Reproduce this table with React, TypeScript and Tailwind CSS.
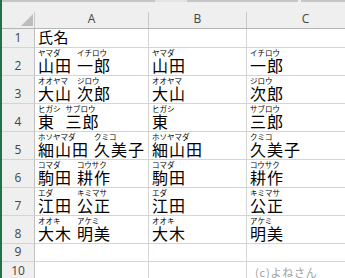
import React from "react";

const names: [string, string, string, string][] = [
  ["山田", "ヤマダ", "一郎", "イチロウ"],
  ["大山", "オオヤマ", "次郎", "ジロウ"],
  ["東", "ヒガシ", "三郎", "サブロウ"],
  ["細山田", "ホソヤマダ", "久美子", "クミコ"],
  ["駒田", "コマダ", "耕作", "コウサク"],
  ["江田", "エダ", "公正", "キミマサ"],
  ["大木", "オオキ", "明美", "アケミ"],
];

const jp = "font-['Noto_Sans_CJK_JP',sans-serif]";
const hdr = "font-['Open_Sans',sans-serif]";

function Part({ k, f }: { k: string; f: string }) {
  return (
    <div className="flex flex-col items-start">
      <div className="text-[7.5px] leading-[7px] h-[7px] mb-[1px] whitespace-nowrap text-black">{f}</div>
      <div className="text-[16px] leading-[16px] tracking-[1px] whitespace-nowrap text-black">{k}</div>
    </div>
  );
}

function RowHead({ n, h }: { n: number; h: string }) {
  return (
    <div
      className={`${h} w-[33px] shrink-0 bg-[#efefef] border-r border-b border-r-[#c0c0c0] border-b-[#d4d4d4] flex items-end justify-center pb-[3px] ${hdr} text-[12px] leading-[12px] text-[#444]`}
    >
      {n}
    </div>
  );
}

function Cell({ w, h, children }: { w: string; h: string; children?: React.ReactNode }) {
  return (
    <div className={`${w} ${h} shrink-0 border-r border-b border-[#d4d4d4] flex items-end pl-[3px] pb-[2px] overflow-hidden ${jp}`}>
      {children}
    </div>
  );
}

function ColHead({ w, label }: { w: string; label: string }) {
  return (
    <div className={`${w} h-[27px] shrink-0 flex border-b border-[#b4b4b4]`}>
      <div className={`flex-1 flex items-end justify-center pb-[3px] ${hdr} text-[12px] leading-[12px] text-[#444]`}>{label}</div>
      <div className="w-[1px] h-[16px] self-end bg-[#c8c8c8]" />
    </div>
  );
}

export default function App() {
  return (
    <div className="w-[345px] h-[278px] overflow-hidden bg-white flex">
      <div className="w-[2px] h-full bg-[#217346] shrink-0" />
      <div className="flex flex-col w-[500px] shrink-0">
        <div className="h-[2px] flex shrink-0">
          <div className="w-[153px] bg-[#c6c6c6]" />
          <div className="w-[32px] bg-[#e4e4e4]" />
          <div className="w-[111px] bg-[#c6c6c6]" />
          <div className="w-[3px] bg-[#efefef]" />
          <div className="flex-1 bg-[#c6c6c6]" />
        </div>
        <div className="flex bg-[#efefef] shrink-0">
          <div className="w-[33px] h-[27px] shrink-0 flex border-b border-[#b4b4b4]">
            <div className="flex-1 flex items-end justify-end pb-[2px] pr-[1px]">
              <svg width="12" height="12" viewBox="0 0 12 12">
                <polygon points="12,0 12,12 0,12" fill="#bdbdbd" />
              </svg>
            </div>
            <div className="w-[1px] h-[16px] self-end bg-[#c8c8c8]" />
          </div>
          <ColHead w="w-[114px]" label="A" />
          <ColHead w="w-[98px]" label="B" />
          <ColHead w="w-[118px]" label="C" />
        </div>
        <div className="flex shrink-0">
          <RowHead n={1} h="h-[19px]" />
          <Cell w="w-[114px]" h="h-[19px]">
            <span className="text-[15px] leading-[16px] tracking-[0.5px] text-black">氏名</span>
          </Cell>
          <Cell w="w-[98px]" h="h-[19px]" />
          <Cell w="w-[118px]" h="h-[19px]" />
        </div>
        {names.map(([a, af, b, bf], i) => (
          <div key={i} className="flex shrink-0">
            <RowHead n={i + 2} h="h-[28px]" />
            <Cell w="w-[114px]" h="h-[28px]">
              <div className="flex gap-[5px]">
                <Part k={a} f={af} />
                <Part k={b} f={bf} />
              </div>
            </Cell>
            <Cell w="w-[98px]" h="h-[28px]">
              <Part k={a} f={af} />
            </Cell>
            <Cell w="w-[118px]" h="h-[28px]">
              <Part k={b} f={bf} />
            </Cell>
          </div>
        ))}
        <div className="flex shrink-0">
          <RowHead n={9} h="h-[18px]" />
          <Cell w="w-[114px]" h="h-[18px]" />
          <Cell w="w-[98px]" h="h-[18px]" />
          <Cell w="w-[118px]" h="h-[18px]" />
        </div>
        <div className="flex shrink-0">
          <RowHead n={10} h="h-[19px]" />
          <Cell w="w-[114px]" h="h-[19px]" />
          <Cell w="w-[98px]" h="h-[19px]" />
          <div className={`w-[118px] h-[19px] shrink-0 border-r border-b border-[#d4d4d4] flex items-end pl-[8px] pb-[1px] ${jp}`}>
            <span className="text-[11px] leading-[14px] tracking-[0.8px] text-[#a0a0a0] whitespace-nowrap">(c)よねさん</span>
          </div>
        </div>
      </div>
    </div>
  );
}
